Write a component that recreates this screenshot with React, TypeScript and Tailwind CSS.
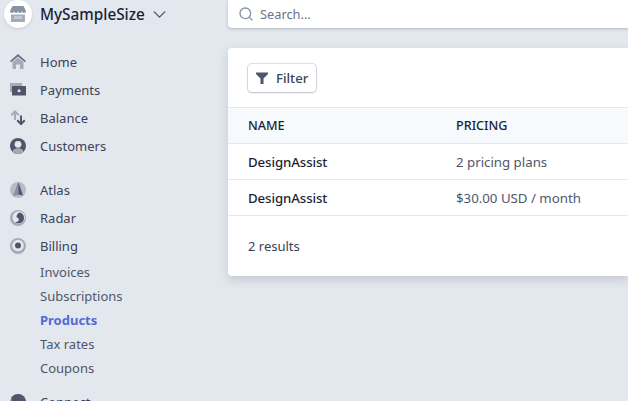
import { ChevronDown, Search } from 'lucide-react'
import type { ReactNode } from 'react'

const light = '#a3acb9'
const dark = '#4f566b'

function HomeIcon() {
  return (
    <svg width="16" height="16" viewBox="0 0 16 16">
      <path d="M2.500 8 8 3.500 13.500 8v7H10v-4.500H6V15H2.500z" fill={light} />
      <path d="M8 0 0 7l1.200 1.300L8 2.500l6.800 5.800L16 7z" fill="#697386" />
    </svg>
  )
}

function PaymentsIcon() {
  return (
    <svg width="16" height="16" viewBox="0 0 16 16">
      <rect x="0" y="1" width="12" height="9" fill={light} />
      <rect x="2" y="4" width="14" height="9.500" rx="0.500" fill={dark} />
      <circle cx="9" cy="8.800" r="1.500" fill="#e3e8ee" />
    </svg>
  )
}

function BalanceIcon() {
  return (
    <svg width="16" height="16" viewBox="0 0 16 16" fill="none" strokeWidth="2">
      <path d="M5 10V1.500M1.200 5.300 5 1.500l3.800 3.800" stroke={light} />
      <path d="M11 5.500v8.500M7.200 10.200 11 14l3.800-3.800" stroke={dark} />
    </svg>
  )
}

function CustomersIcon() {
  return (
    <svg width="16" height="16" viewBox="0 0 16 16">
      <circle cx="8" cy="8" r="8" fill={dark} />
      <circle cx="8" cy="6.300" r="3.400" fill="#e3e8ee" />
      <path d="M2.300 13.600C3.500 11 5.500 10.200 8 10.200s4.500.8 5.700 3.400A8 8 0 0 1 8 16a8 8 0 0 1-5.700-2.400z" fill={light} />
    </svg>
  )
}

function AtlasIcon() {
  return (
    <svg width="16" height="16" viewBox="0 0 16 16">
      <circle cx="8" cy="8" r="8" fill="#b4bcc8" />
      <path d="M8.500 0 13 13.500 8.500 12.500 3.500 13.500z" fill={dark} />
      <path d="M8.500 0 3.500 13.500 8.500 12.500z" fill="#8792a2" />
    </svg>
  )
}

function RadarIcon() {
  return (
    <svg width="16" height="16" viewBox="0 0 16 16">
      <circle cx="8" cy="8" r="8" fill={light} />
      <circle cx="8.800" cy="7.500" r="6.200" fill="#e3e8ee" />
      <path d="M9.500 2.500a5.500 5.500 0 0 1 .5 10.700C8 13.700 6 13 5 12c1.500.2 3.500-.3 3.800-2 .2-1.500-.8-2.300-2.300-2.800C6.500 5 7.800 3 9.500 2.500z" fill={dark} />
    </svg>
  )
}

function BillingIcon() {
  return (
    <svg width="16" height="16" viewBox="0 0 16 16">
      <circle cx="8" cy="8" r="8" fill={light} />
      <circle cx="8" cy="7.500" r="5.800" fill="#e3e8ee" />
      <circle cx="8" cy="7.500" r="3" fill={dark} />
    </svg>
  )
}

function ConnectIcon() {
  return (
    <svg width="16" height="16" viewBox="0 0 16 16">
      <circle cx="8" cy="8" r="8" fill={light} />
      <path d="M8 0a8 8 0 0 1 8 8H8z" fill={dark} />
      <path d="M1.500 3.500A8 8 0 0 1 8 0v8H1.500z" fill={dark} />
    </svg>
  )
}

function NavItem({ icon, label, className = '' }: { icon: ReactNode; label: string; className?: string }) {
  return (
    <div className={`flex h-7 shrink-0 items-center ${className}`}>
      <div className="w-[40px] shrink-0 pl-[10px]">{icon}</div>
      <span className="text-[13px] leading-[26px] text-[#3c4257]">{label}</span>
    </div>
  )
}

function SubItem({ label, active }: { label: string; active?: boolean }) {
  return (
    <div className={`flex h-6 shrink-0 items-center pl-[40px] pt-[2px] text-[13px] ${active ? 'font-bold text-[#5469d4]' : 'text-[#4f566b]'}`}>
      {label}
    </div>
  )
}

function Sidebar() {
  return (
    <aside className="flex w-[228px] shrink-0 flex-col">
      <div className="flex h-7 shrink-0 items-center pl-[4px]">
        <div className="flex h-7 w-7 items-center justify-center rounded-full bg-white shadow-sm">
          <svg width="16" height="17" viewBox="0 0 16 17">
            <path d="M2.500 0h11L16 5a2 2 0 0 1-4 0 2 2 0 0 1-4 0 2 2 0 0 1-4 0 2 2 0 0 1-4 0z" fill="#8792a2" />
            <path d="M1 8.500h14V16H1z" fill={light} />
            <path d="M4 10h8v3H4z" fill="#c1c9d2" />
          </svg>
        </div>
        <span className="ml-[8px] text-[15.300px] font-medium text-[#1a1f36]">MySampleSize</span>
        <ChevronDown className="ml-[4px] text-[#4f566b]" size={21} strokeWidth={1.600} />
      </div>
      <div className="mt-[20px] flex flex-col">
        <NavItem icon={<HomeIcon />} label="Home" />
        <NavItem icon={<PaymentsIcon />} label="Payments" />
        <NavItem icon={<BalanceIcon />} label="Balance" />
        <NavItem icon={<CustomersIcon />} label="Customers" />
        <NavItem className="mt-[16px]" icon={<AtlasIcon />} label="Atlas" />
        <NavItem icon={<RadarIcon />} label="Radar" />
        <NavItem icon={<BillingIcon />} label="Billing" />
        <div className="flex flex-col">
          <SubItem label="Invoices" />
          <SubItem label="Subscriptions" />
          <SubItem label="Products" active />
          <SubItem label="Tax rates" />
          <SubItem label="Coupons" />
        </div>
        <NavItem className="mt-[8px]" icon={<ConnectIcon />} label="Connect" />
      </div>
    </aside>
  )
}

export default function App() {
  return (
    <div
      className="flex h-[401px] w-[628px] overflow-hidden bg-[#e3e8ee] text-[#3c4257]"
      style={{ fontFamily: '"Noto Sans", "Open Sans", sans-serif' }}
    >
      <Sidebar />
      <main className="flex min-w-0 flex-1 flex-col">
        <div className="flex h-7 shrink-0 items-center gap-[6px] rounded-bl-[4px] bg-white pl-[10px] shadow-[0_1px_3px_rgba(60,66,87,0.3)]">
          <Search size={16} strokeWidth={2} className="text-[#8792a2]" />
          <span className="pt-[2px] text-[12.800px] text-[#697386]">Search...</span>
        </div>
        <section className="mt-[20px] rounded-l-[4px] bg-white shadow-[0_4px_10px_rgba(60,66,87,0.18)]">
          <div className="flex h-[59px] items-start pl-[20px] pt-[16px]">
            <button className="flex h-[28px] w-[68px] items-center gap-[8px] rounded-[4px] bg-white pl-[8px] text-[13.200px] font-medium text-[#3c4257] shadow-[0_0_0_1px_rgba(60,66,87,0.16),0_1px_2px_rgba(60,66,87,0.2)]">
              <svg width="12" height="12" viewBox="0 0 12 12" fill={dark}>
                <path d="M0 .5h12v1.500L7.500 6.500V12h-3V6.500L0 2z" />
              </svg>
              <span className="pt-[2px]">Filter</span>
            </button>
          </div>
          <div className="flex h-[37px] items-center border-y border-[#e3e8ee] bg-[#f7fafc] pt-[1px] text-[12.600px] font-medium text-[#1a1f36]">
            <div className="w-[228px] pl-[20px]">NAME</div>
            <div>PRICING</div>
          </div>
          <div className="flex h-9 items-center border-b border-[#e3e8ee] pt-[2px] text-[13.250px]">
            <div className="w-[228px] pl-[20px] font-medium tracking-[-0.1px] text-[#1a1f36]">DesignAssist</div>
            <div className="text-[#4f566b]">2 pricing plans</div>
          </div>
          <div className="flex h-9 items-center border-b border-[#e3e8ee] pt-[2px] text-[13.250px]">
            <div className="w-[228px] pl-[20px] font-medium tracking-[-0.1px] text-[#1a1f36]">DesignAssist</div>
            <div className="text-[#4f566b]">$30.00 USD / month</div>
          </div>
          <div className="flex h-[60px] items-center pl-[20px] pt-[2px] text-[13px] text-[#3c4257]">2 results</div>
        </section>
      </main>
    </div>
  )
}
